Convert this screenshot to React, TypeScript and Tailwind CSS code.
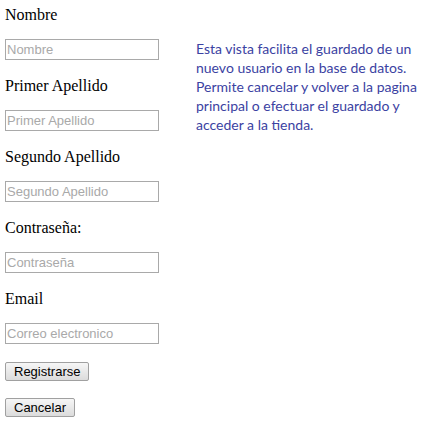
import React from "react";

const fields = [
  { label: "Nombre", ph: "Nombre", type: "text" },
  { label: "Primer Apellido", ph: "Primer Apellido", type: "text" },
  { label: "Segundo Apellido", ph: "Segundo Apellido", type: "text" },
  { label: "Contraseña:", ph: "Contraseña", type: "password" },
  { label: "Email", ph: "Correo electronico", type: "text" },
];

export default function App() {
  return (
    <div className="w-[433px] h-[440px] bg-white flex">
      <div className="w-[190px] pl-[5px] pt-[6px] flex flex-col">
        {fields.map((f) => (
          <div key={f.label} className="flex flex-col">
            <div className="h-[18px] text-[16px] leading-[18px] text-black [font-family:'Liberation_Serif',serif]">
              {f.label}
            </div>
            <input
              type={f.type}
              placeholder={f.ph}
              className="mt-[15px] mb-[17px] w-[154px] h-[21px] border border-[#a9a9a9] px-[1px] text-[13px] [font-family:'Liberation_Sans',sans-serif] placeholder:text-[#a9a9a9] outline-none"
            />
          </div>
        ))}
        <div className="flex flex-col items-start gap-[17px] mt-[1px]">
          <button className="h-[19px] px-[8px] border border-[#a0a0a0] rounded-[2px] bg-gradient-to-b from-[#f6f6f6] to-[#dcdcdc] text-[13px] leading-[17px] text-black [font-family:'Liberation_Sans',sans-serif]">
            Registrarse
          </button>
          <button className="h-[19px] px-[8px] border border-[#a0a0a0] rounded-[2px] bg-gradient-to-b from-[#f6f6f6] to-[#dcdcdc] text-[13px] leading-[17px] text-black [font-family:'Liberation_Sans',sans-serif]">
            Cancelar
          </button>
        </div>
      </div>
      <div className="pl-[6px] pt-[39px] w-[243px]">
        <p className="text-[14px] leading-[19px] text-[#3b42a2] [font-family:Lato,sans-serif] whitespace-nowrap">
          Esta vista facilita el guardado de un
          <br />
          nuevo usuario en la base de datos.
          <br />
          Permite cancelar y volver a la pagina
          <br />
          principal o efectuar el guardado y
          <br />
          acceder a la tienda.
        </p>
      </div>
    </div>
  );
}
